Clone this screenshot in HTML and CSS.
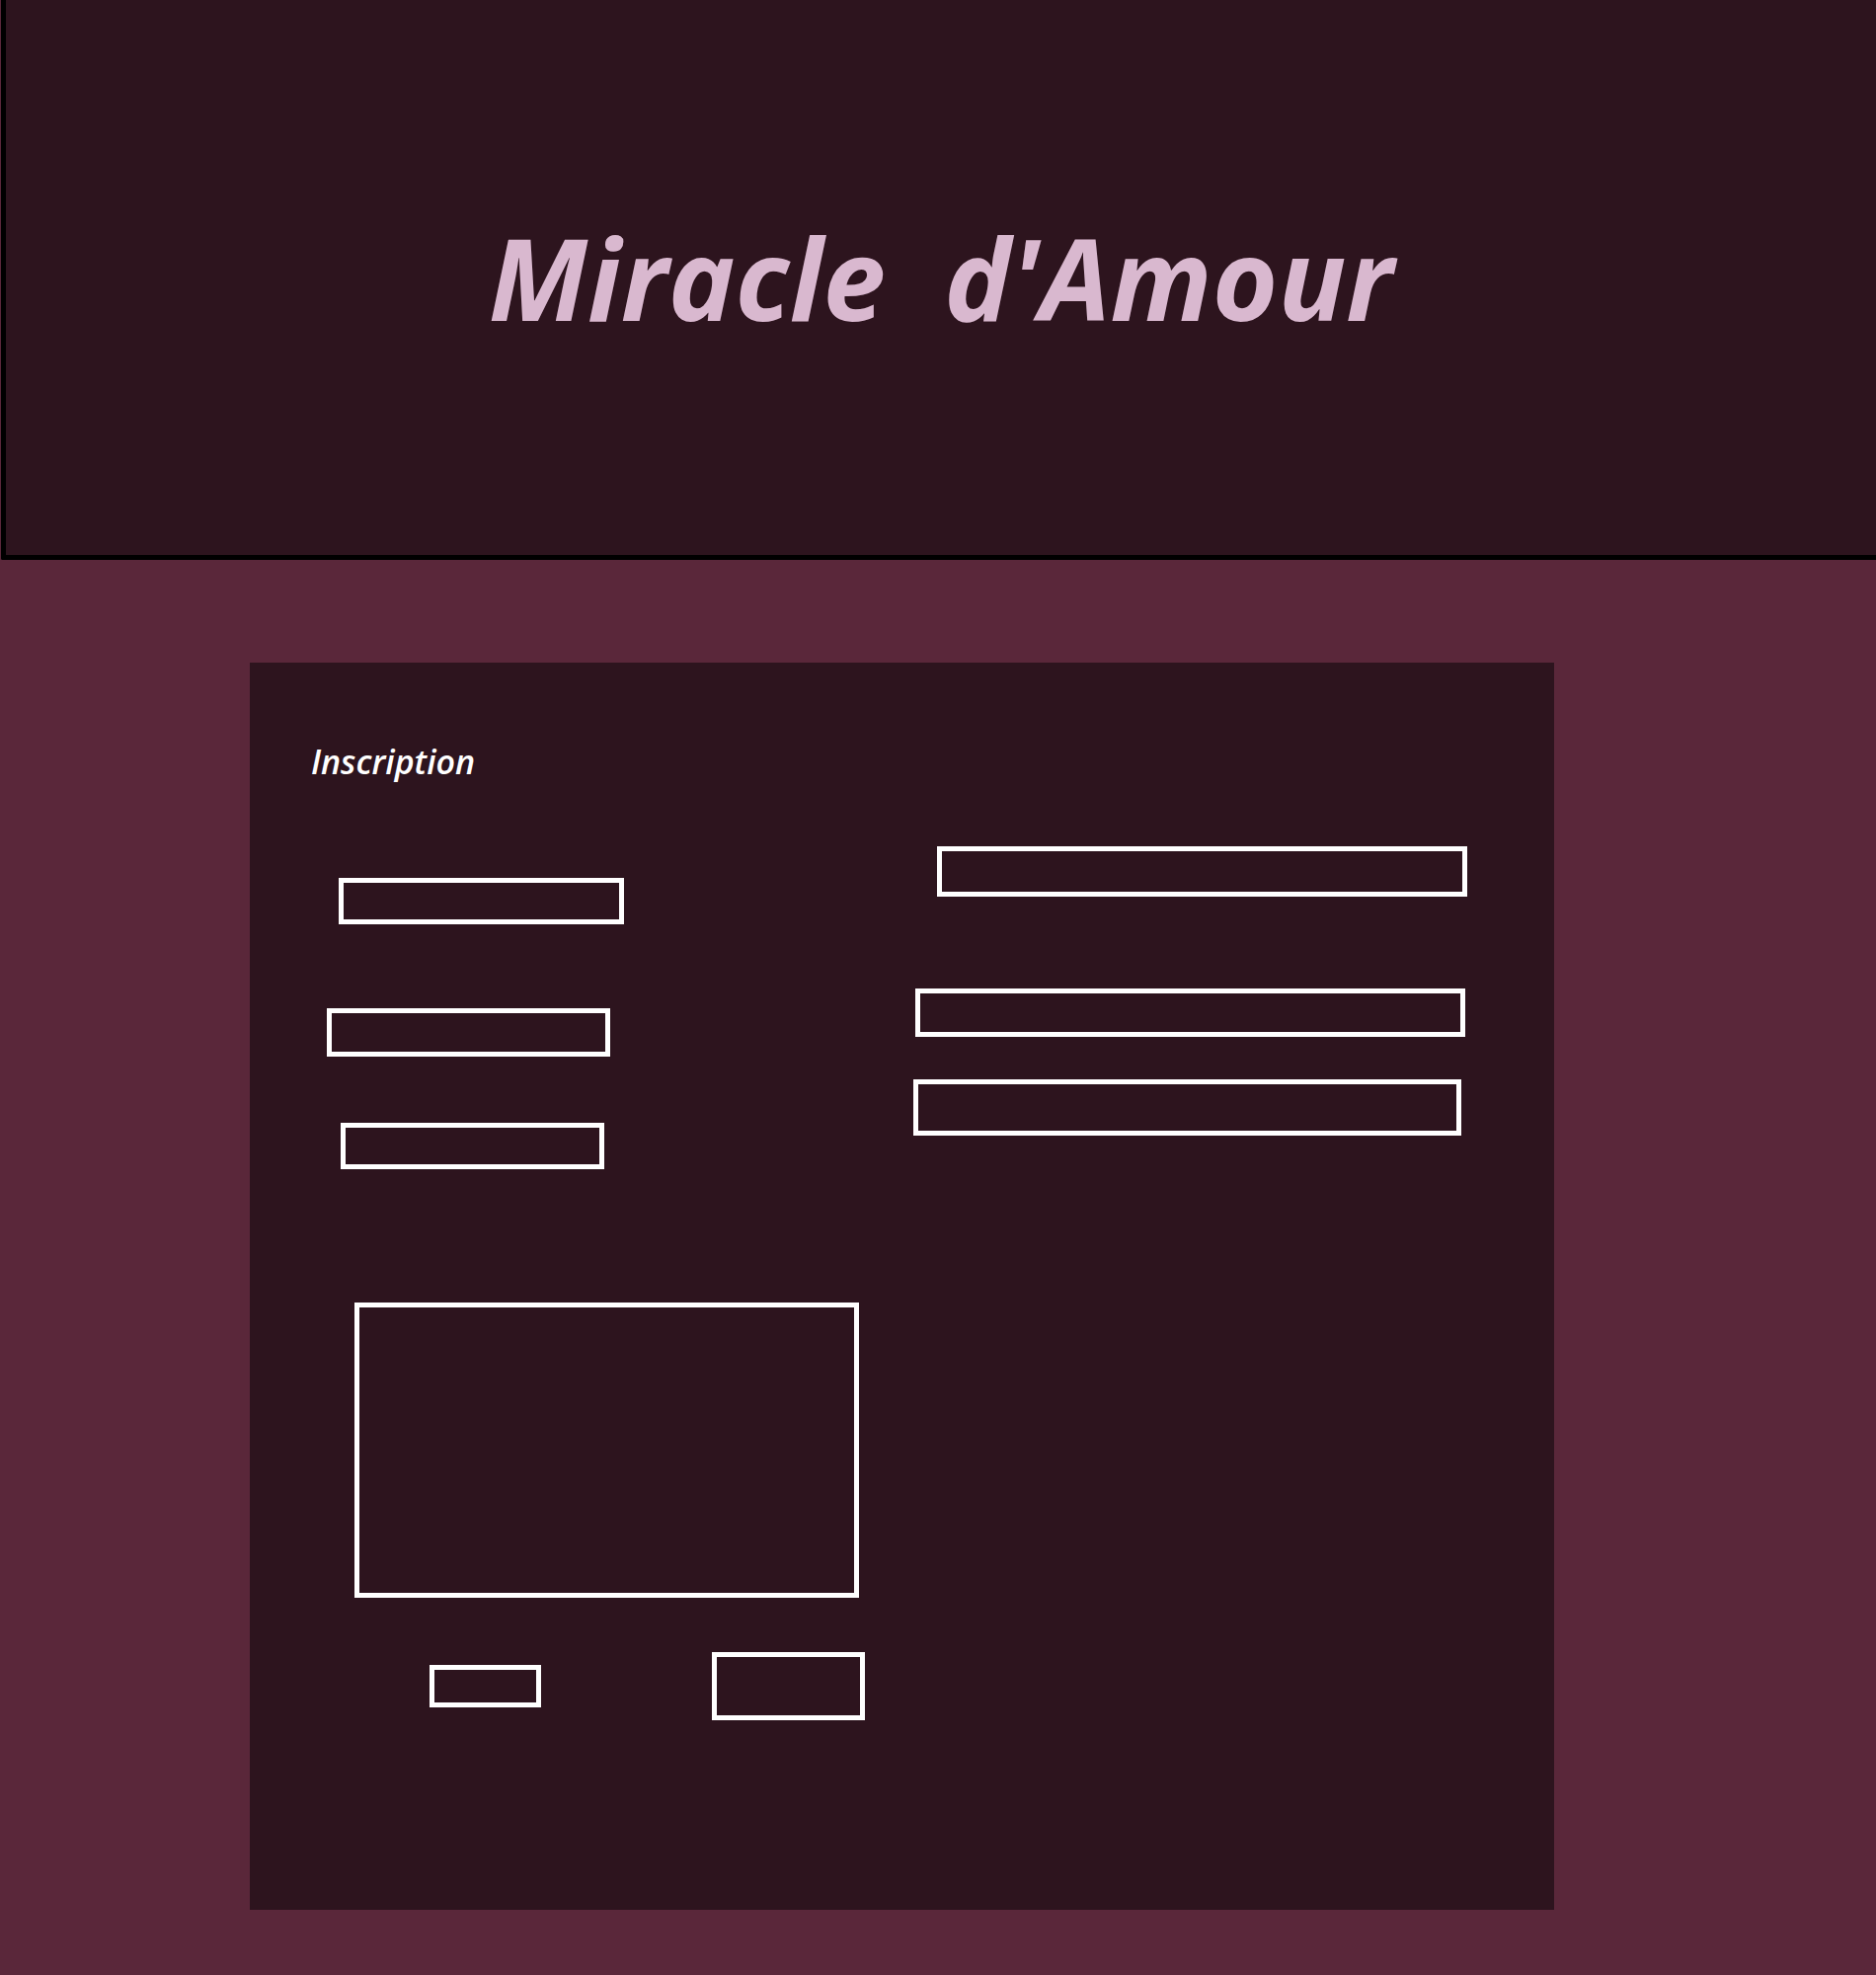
FILE: index.html
```html
<!DOCTYPE html>
<html lang="fr">
<head>
<meta charset="utf-8">
<meta name="viewport" content="width=device-width, initial-scale=1">
<title>Miracle d'Amour</title>
<link rel="stylesheet" href="styles.css">
</head>
<body>
<header class="banner">
  <h1 class="banner-title">Miracle&nbsp; d'Amour</h1>
</header>
<main class="page">
  <form class="card">
    <h2 class="card-title">Inscription</h2>
    <div class="columns">
      <div class="column column-left">
        <input class="field field-lastname" type="text" aria-label="Nom">
        <input class="field field-firstname" type="text" aria-label="Prénom">
        <input class="field field-age" type="text" aria-label="Âge">
        <textarea class="field field-message" aria-label="Message"></textarea>
        <div class="actions">
          <button class="button button-reset" type="reset" aria-label="Annuler"></button>
          <button class="button button-submit" type="submit" aria-label="Envoyer"></button>
        </div>
      </div>
      <div class="column">
        <input class="field field-email" type="email" aria-label="Adresse e-mail">
        <input class="field field-password" type="password" aria-label="Mot de passe">
        <input class="field field-confirm" type="password" aria-label="Confirmation">
      </div>
    </div>
  </form>
</main>
</body>
</html>
```

FILE: styles.css
```css
* {
  box-sizing: border-box;
}

body {
  margin: 0;
  background: #5a273a;
  color: #fff;
  font-family: "Ink Free", "Open Sans", sans-serif;
  font-style: italic;
}

.banner {
  display: flex;
  align-items: center;
  justify-content: center;
  min-height: 567px;
  margin-left: 1px;
  border: solid #000;
  border-width: 0 0 5px 5px;
  border-bottom-left-radius: 2px;
  background: #2d141e;
}

.banner-title {
  margin: 0;
  color: #d9b8cf;
  font-size: 114px;
  font-weight: 700;
  line-height: 160px;
  text-align: center;
}

.page {
  display: grid;
  grid-template-columns: 253fr 1321fr 326fr;
  padding: 104px 0 66px;
}

.card {
  grid-column: 2;
  padding: 80px 88px 192px 62px;
  background: #2d141e;
}

.card-title {
  margin: 0 0 65px;
  font-size: 34px;
  font-weight: 600;
  line-height: 41px;
}

.columns {
  display: grid;
  grid-template-columns: minmax(0, 610fr) minmax(0, 561fr);
}

.column {
  display: flex;
  flex-direction: column;
}

.column-left {
  padding-top: 32px;
}

.field,
.button {
  min-width: 0;
  padding: 4px 12px;
  border: 5px solid #fff;
  border-radius: 0;
  background: transparent;
  color: #fff;
  font: inherit;
}

.field-lastname {
  height: 47px;
  margin: 0 293px 85px 28px;
}

.field-firstname {
  height: 49px;
  margin: 0 307px 67px 16px;
}

.field-age {
  height: 47px;
  margin: 0 313px 135px 30px;
}

.field-message {
  height: 299px;
  margin: 0 55px 55px 44px;
  resize: none;
}

.field-email {
  height: 51px;
  margin: 0 0 93px 24px;
}

.field-password {
  height: 49px;
  margin: 0 2px 43px;
}

.field-confirm {
  height: 57px;
  margin-right: 6px;
}

.actions {
  display: flex;
  align-items: center;
  justify-content: space-between;
  padding: 0 49px 0 120px;
}

.button-reset {
  width: 113px;
  height: 43px;
}

.button-submit {
  width: 155px;
  height: 69px;
}
```
